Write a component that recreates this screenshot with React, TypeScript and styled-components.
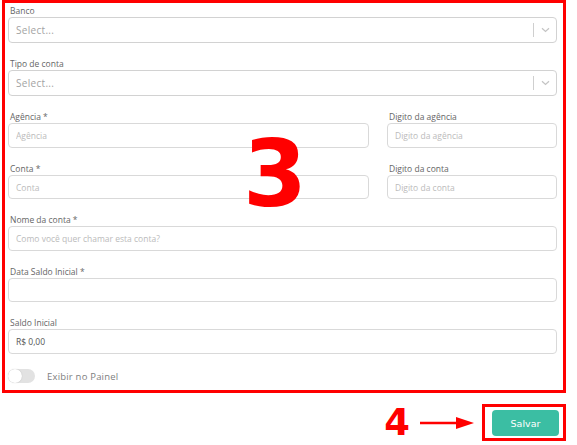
import React from 'react';
import styled, {createGlobalStyle} from 'styled-components';

const GlobalStyle = createGlobalStyle`
    html, body {
        margin: 0;
        padding: 0;
        background: #fff;
        font-family: "Open Sans", "Liberation Sans", sans-serif;
    }
`;

const Page = styled.div`
    width: 564px;
    margin-left: 2px;
`;

const Panel = styled.form`
    position: relative;
    border: 3px solid #ff0000;
    padding: 2px 6px 6px 3px;
`;

const Field = styled.div`
    display: flex;
    flex-direction: column;
    margin-bottom: 15px;
`;

const Row = styled.div`
    display: grid;
    grid-template-columns: 361px 170px;
    column-gap: 18px;
`;

const Label = styled.label`
    font-size: 8.5px;
    line-height: 11px;
    color: #666;
    margin: 0 0 1px 2px;
`;

const Input = styled.input<{$h?: number}>`
    box-sizing: border-box;
    width: 100%;
    height: ${p => p.$h || 25}px;
    border: 1px solid #d9d9d9;
    border-radius: 4px;
    padding: 0 7px;
    font-family: inherit;
    font-size: 8.5px;
    color: #555;
    outline: none;
    &::placeholder {
        color: #bbb;
    }
`;

const SelectBox = styled.div`
    box-sizing: border-box;
    height: 26px;
    border: 1px solid #d2d2d2;
    border-radius: 4px;
    display: flex;
    align-items: center;
    padding-left: 7px;
`;

const SelectValue = styled.span`
    flex: 1;
    font-size: 10px;
    color: #a3a3a3;
    letter-spacing: 0.3px;
`;

const Separator = styled.span`
    width: 1px;
    height: 14px;
    background: #cfcfcf;
`;

const Indicator = styled.span`
    width: 22px;
    display: flex;
    justify-content: center;
    align-items: center;
`;

const ToggleRow = styled.div`
    display: flex;
    align-items: center;
    gap: 12px;
    margin: -1px 0 0 0;
    height: 16px;
`;

const Track = styled.span`
    position: relative;
    width: 27px;
    height: 14px;
    border-radius: 7px;
    background: #e2e2e2;
`;

const Knob = styled.span`
    position: absolute;
    left: 0;
    top: 0;
    width: 14px;
    height: 14px;
    border-radius: 50%;
    background: #fff;
    box-shadow: 0 0 1px rgba(0, 0, 0, 0.25);
`;

const ToggleText = styled.span`
    font-size: 9.5px;
    color: #808080;
    letter-spacing: 0.2px;
`;

const BigNumber = styled.span<{$size: number}>`
    font-family: "DejaVu Sans", Verdana, sans-serif;
    font-weight: 700;
    font-size: ${p => p.$size}px;
    line-height: 1;
    color: #ff0000;
`;

const Overlay = styled.div`
    position: absolute;
    left: 238px;
    top: 126px;
    pointer-events: none;
`;

const Footer = styled.div`
    display: flex;
    justify-content: flex-end;
    align-items: center;
    margin-top: 11px;
`;

const Arrow = styled.svg`
    margin: 0 6px 0 10px;
`;

const Highlight = styled.div`
    border: 3px solid #ff0000;
    padding: 3px 4px 2px 7px;
`;

const SaveButton = styled.button`
    width: 67px;
    height: 26px;
    border: none;
    border-radius: 4px;
    background: #3bbea3;
    color: #fff;
    font-family: "DejaVu Sans", Verdana, sans-serif;
    font-size: 9.5px;
    display: block;
`;

const Select = ({label}: {label: string}) => (
    <Field>
        <Label>{label}</Label>
        <SelectBox>
            <SelectValue>Select...</SelectValue>
            <Separator/>
            <Indicator>
                <svg width="9" height="6" viewBox="0 0 9 6">
                    <path d="M1 1.2 L4.5 4.5 L8 1.2" fill="none" stroke="#c4c4c4" strokeWidth="1.2"/>
                </svg>
            </Indicator>
        </SelectBox>
    </Field>
);

const TextField = ({label, placeholder, value, h}: {label: string, placeholder?: string, value?: string, h?: number}) => (
    <Field>
        <Label>{label}</Label>
        <Input $h={h} placeholder={placeholder} defaultValue={value}/>
    </Field>
);

const App = () => {
    return (
        <Page>
            <GlobalStyle/>
            <Panel>
                <Select label="Banco"/>
                <Select label="Tipo de conta"/>
                <Row>
                    <TextField label="Agência *" placeholder="Agência"/>
                    <TextField label="Digito da agência" placeholder="Digito da agência"/>
                </Row>
                <Row>
                    <TextField label="Conta *" placeholder="Conta" h={24}/>
                    <TextField label="Digito da conta" placeholder="Digito da conta" h={24}/>
                </Row>
                <TextField label="Nome da conta *" placeholder="Como você quer chamar esta conta?"/>
                <TextField label="Data Saldo Inicial *" h={24}/>
                <TextField label="Saldo Inicial" value="R$ 0,00"/>
                <ToggleRow>
                    <Track><Knob/></Track>
                    <ToggleText>Exibir no Painel</ToggleText>
                </ToggleRow>
                <Overlay>
                    <BigNumber $size={92}>3</BigNumber>
                </Overlay>
            </Panel>
            <Footer>
                <BigNumber $size={37}>4</BigNumber>
                <Arrow width="56" height="14" viewBox="0 0 56 14">
                    <line x1="0" y1="7" x2="38" y2="7" stroke="#ff0000" strokeWidth="2.5"/>
                    <polygon points="36,1 54,7 36,13" fill="#ff0000"/>
                </Arrow>
                <Highlight>
                    <SaveButton type="button">Salvar</SaveButton>
                </Highlight>
            </Footer>
        </Page>
    );
};

export default App;
